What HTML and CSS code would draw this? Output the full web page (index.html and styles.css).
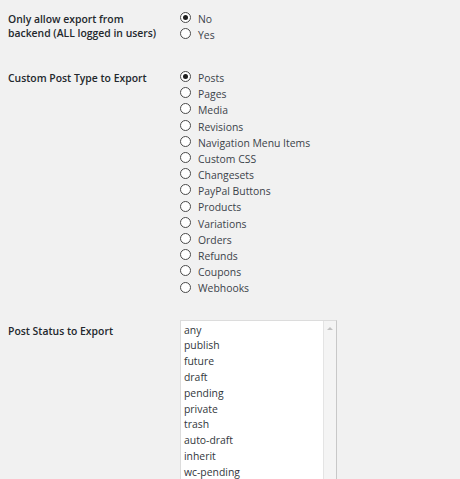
FILE: index.html
```html
<!DOCTYPE html>
<html>
<head>
<meta charset="utf-8">
<link rel="stylesheet" href="styles.css">
</head>
<body>
<div class="form">
  <div class="row">
    <div class="label">Only allow export from backend (ALL logged in users)</div>
    <div class="field">
      <label class="opt"><span class="radio checked"></span>No</label>
      <label class="opt"><span class="radio"></span>Yes</label>
    </div>
  </div>
  <div class="row">
    <div class="label">Custom Post Type to Export</div>
    <div class="field">
      <label class="opt"><span class="radio checked"></span>Posts</label>
      <label class="opt"><span class="radio"></span>Pages</label>
      <label class="opt"><span class="radio"></span>Media</label>
      <label class="opt"><span class="radio"></span>Revisions</label>
      <label class="opt"><span class="radio"></span>Navigation Menu Items</label>
      <label class="opt"><span class="radio"></span>Custom CSS</label>
      <label class="opt"><span class="radio"></span>Changesets</label>
      <label class="opt"><span class="radio"></span>PayPal Buttons</label>
      <label class="opt"><span class="radio"></span>Products</label>
      <label class="opt"><span class="radio"></span>Variations</label>
      <label class="opt"><span class="radio"></span>Orders</label>
      <label class="opt"><span class="radio"></span>Refunds</label>
      <label class="opt"><span class="radio"></span>Coupons</label>
      <label class="opt"><span class="radio"></span>Webhooks</label>
    </div>
  </div>
  <div class="row row-select">
    <div class="label label-select">Post Status to Export</div>
    <div class="field">
      <div class="listbox">
        <div class="options">
          <div>any</div>
          <div>publish</div>
          <div>future</div>
          <div>draft</div>
          <div>pending</div>
          <div>private</div>
          <div>trash</div>
          <div>auto-draft</div>
          <div>inherit</div>
          <div>wc-pending</div>
        </div>
        <div class="scrollbar"><span class="arrow"></span></div>
      </div>
    </div>
  </div>
</div>
</body>
</html>
```

FILE: styles.css
```css
html, body {
  margin: 0;
  padding: 0;
  background: #f1f1f1;
  height: 100%;
  overflow: hidden;
}
body {
  font-family: "Open Sans", "Noto Sans", sans-serif;
  font-size: 10.4px;
  color: #3c434a;
}
.form {
  padding: 11px 0 0 8px;
  display: flex;
  flex-direction: column;
  gap: 26.6px;
}
.row {
  display: grid;
  grid-template-columns: 172px 1fr;
}
.row-select {
  margin-top: -3.6px;
}
.label {
  font-weight: 600;
  color: #23282d;
  line-height: 14px;
  padding-top: 1px;
  width: 160px;
}
.label-select {
  padding-top: 4px;
}
.field {
  display: flex;
  flex-direction: column;
}
.opt {
  display: flex;
  align-items: center;
  height: 16.2px;
  line-height: 16.2px;
}
.radio {
  box-sizing: border-box;
  width: 11px;
  height: 11px;
  border: 1px solid #4a4a4a;
  border-radius: 50%;
  background: #fff;
  margin-left: -0.5px;
  margin-right: 7.5px;
  margin-top: -3px;
  display: flex;
  align-items: center;
  justify-content: center;
}
.radio.checked::after {
  content: "";
  width: 5px;
  height: 5px;
  border-radius: 50%;
  background: #1e1e1e;
}
.listbox {
  display: flex;
  width: 157px;
  height: 170px;
  background: #fff;
  border: 1px solid #dcdcdc;
  border-right-color: #c8c8c8;
  box-sizing: border-box;
}
.options {
  flex: 1;
  padding: 2px 0 0 3px;
  line-height: 15.8px;
  color: #32373c;
  overflow: hidden;
}
.scrollbar {
  width: 12px;
  background: #f4f4f4;
  border-left: 1px solid #e4e4e4;
  display: flex;
  justify-content: center;
  padding-top: 6px;
}
.arrow {
  width: 0;
  height: 0;
  border-left: 3px solid transparent;
  border-right: 3px solid transparent;
  border-bottom: 3px solid #c2c2c2;
}
```
